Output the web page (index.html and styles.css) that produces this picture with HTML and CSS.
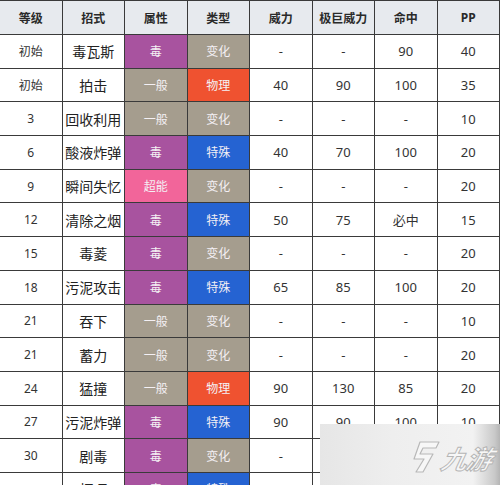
FILE: index.html
```html
<!DOCTYPE html>
<html lang="zh">
<head>
<meta charset="utf-8">
<link rel="stylesheet" href="styles.css">
</head>
<body>
<div class="wrap">
<table class="moves">
<thead>
<tr><th>等级</th><th>招式</th><th>属性</th><th>类型</th><th>威力</th><th>极巨威力</th><th>命中</th><th>PP</th></tr>
</thead>
<tbody>
<tr><td class="lv">初始</td><td class="name">毒瓦斯</td><td class="t poison">毒</td><td class="t status">变化</td><td>-</td><td>-</td><td>90</td><td>40</td></tr>
<tr><td class="lv">初始</td><td class="name">拍击</td><td class="t normal">一般</td><td class="t physical">物理</td><td>40</td><td>90</td><td>100</td><td>35</td></tr>
<tr><td class="lv">3</td><td class="name">回收利用</td><td class="t normal">一般</td><td class="t status">变化</td><td>-</td><td>-</td><td>-</td><td>10</td></tr>
<tr><td class="lv">6</td><td class="name">酸液炸弹</td><td class="t poison">毒</td><td class="t special">特殊</td><td>40</td><td>70</td><td>100</td><td>20</td></tr>
<tr><td class="lv">9</td><td class="name">瞬间失忆</td><td class="t psychic">超能</td><td class="t status">变化</td><td>-</td><td>-</td><td>-</td><td>20</td></tr>
<tr><td class="lv">12</td><td class="name">清除之烟</td><td class="t poison">毒</td><td class="t special">特殊</td><td>50</td><td>75</td><td>必中</td><td>15</td></tr>
<tr><td class="lv">15</td><td class="name">毒菱</td><td class="t poison">毒</td><td class="t status">变化</td><td>-</td><td>-</td><td>-</td><td>20</td></tr>
<tr><td class="lv">18</td><td class="name">污泥攻击</td><td class="t poison">毒</td><td class="t special">特殊</td><td>65</td><td>85</td><td>100</td><td>20</td></tr>
<tr><td class="lv">21</td><td class="name">吞下</td><td class="t normal">一般</td><td class="t status">变化</td><td>-</td><td>-</td><td>-</td><td>10</td></tr>
<tr><td class="lv">21</td><td class="name">蓄力</td><td class="t normal">一般</td><td class="t status">变化</td><td>-</td><td>-</td><td>-</td><td>20</td></tr>
<tr><td class="lv">24</td><td class="name">猛撞</td><td class="t normal">一般</td><td class="t physical">物理</td><td>90</td><td>130</td><td>85</td><td>20</td></tr>
<tr><td class="lv">27</td><td class="name">污泥炸弹</td><td class="t poison">毒</td><td class="t special">特殊</td><td>90</td><td>90</td><td>100</td><td>10</td></tr>
<tr><td class="lv">30</td><td class="name">剧毒</td><td class="t poison">毒</td><td class="t status">变化</td><td>-</td><td>-</td><td>90</td><td>10</td></tr>
<tr><td class="lv">33</td><td class="name">打嗝</td><td class="t poison">毒</td><td class="t special">特殊</td><td>120</td><td>90</td><td>90</td><td>10</td></tr>
</tbody>
</table>
<div class="watermark">
<svg class="wm-icon" width="30" height="34" viewBox="0 0 30 34">
<path d="M9 2 L28 2 L25 8 L12 8 L9 14 L22 14 L12 32 L5 32 L13 19 L3 19 Z" fill="#f7f7f7" stroke="#b8b8b8" stroke-width="1.2" stroke-linejoin="round"/>
</svg>
<span class="wm-text">九游</span>
</div>
</div>
</body>
</html>
```
FILE: styles.css
```css
html, body {
  margin: 0;
  padding: 0;
  background: #ffffff;
  overflow: hidden;
}
.wrap {
  position: relative;
  width: 500px;
  height: 485px;
  overflow: hidden;
}
.moves {
  border-collapse: collapse;
  table-layout: fixed;
  width: 501px;
  margin-left: -1px;
  font-family: "Segoe UI", "Noto Sans", "Noto Sans CJK SC", sans-serif;
  color: #333;
}
.moves th, .moves td {
  border: 1px solid #3a3a3a;
  text-align: center;
  vertical-align: middle;
  padding: 0;
}
.moves th {
  height: 33px;
  background: #e7eaee;
  font-size: 12px;
  font-weight: bold;
  color: #2a2a2a;
}
.moves td {
  height: 32.7px;
  font-size: 13px;
  color: #333;
}
.moves td.lv {
  font-size: 12px;
}
.moves td.name {
  font-size: 14px;
  color: #222;
}
.moves td.t {
  font-size: 12px;
  color: #f4f0f4;
}
.poison { background: #a8539f; }
.normal { background: #a59d8e; }
.status { background: #a59d8e; }
.physical { background: #ef5230; }
.special { background: #2563d2; }
.psychic { background: #f2659a; }
.watermark {
  position: absolute;
  left: 320px;
  top: 424px;
  width: 180px;
  height: 61px;
  background: linear-gradient(90deg, #e6e6e6 0%, #eeeeee 40%, #f2f2f2 85%, #c9c9c9 97%, #b5b5b5 100%);
  display: flex;
  align-items: center;
  justify-content: flex-end;
  padding-right: 8px;
  box-sizing: border-box;
  gap: 1px;
}
.wm-icon {
  margin-top: 4px;
}
.wm-text {
  font-family: "Noto Sans CJK SC", sans-serif;
  font-size: 26px;
  font-weight: bold;
  font-style: italic;
  color: #f7f7f7;
  -webkit-text-stroke: 1px #b5b5b5;
  transform: skewX(-12deg);
  margin-top: 6px;
  letter-spacing: -1px;
}
```
